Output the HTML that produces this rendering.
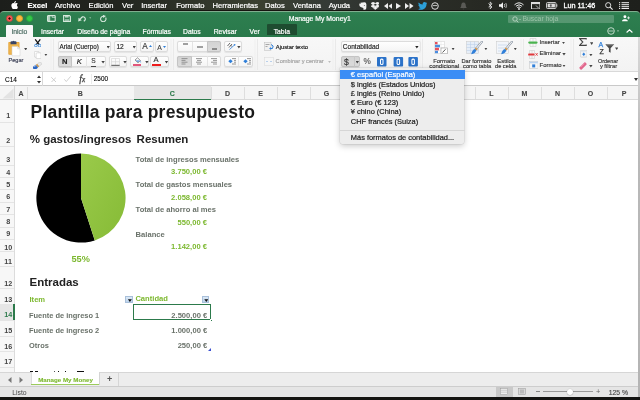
<!DOCTYPE html>
<html><head><meta charset="utf-8">
<style>
*{margin:0;padding:0;box-sizing:border-box}
html,body{width:640px;height:400px;overflow:hidden;background:#141412;font-family:"Liberation Sans",sans-serif}
.a{position:absolute;white-space:nowrap}
#menubar{left:0;top:0;width:640px;height:11px;background:linear-gradient(90deg,#1c1e1b 0,#22251f 120px,#30352a 200px,#3a4030 260px,#343a36 330px,#2b2e29 400px,#282a24 470px,#20221e 560px,#1e201c 640px);border-bottom:0.8px solid #16140f;color:#fff;font-size:7.6px;-webkit-text-stroke:0.2px #fff}
#menubar .a{top:0.5px;line-height:9px}
#title{left:0;top:11px;width:640px;height:26px;border-radius:4px 4px 0 0;background:linear-gradient(#318354,#2d7e4f 3px,#2a794b);border-top:1px solid #7fae8e}
.tab{top:14.6px;font-size:6.8px;color:#fff;line-height:9px;-webkit-text-stroke:0.2px #fff}
.btn{position:absolute;background:linear-gradient(#fefefe,#f5f5f5);border:0.7px solid #dcdcdc;border-radius:2px;box-shadow:0 0.6px 0.8px rgba(0,0,0,.07)}
.prs{background:linear-gradient(#d3d3d3,#dcdcdc);border-color:#c4c4c4}
.sep{position:absolute;top:2px;width:0.8px;height:31px;background:#e9e9e9;box-shadow:-2.5px 0 0 #efefef}
.rt{position:absolute;white-space:nowrap;font-size:6.8px;line-height:8px;color:#333;-webkit-text-stroke-width:0.15px}
.dd{position:absolute;width:3.4px;height:2.6px;background:#444;clip-path:polygon(0 0,100% 0,50% 100%)}
#ribbon{left:0;top:37px;width:640px;height:35px;background:linear-gradient(#f8f8f8,#f3f3f3);border-bottom:1px solid #d9d9d9}
#fbar{left:0;top:72px;width:640px;height:14px;background:#fff;border-bottom:1.5px solid #c9c9c9}
.hd{top:2.5px;text-align:center;font-size:7px;font-weight:bold;line-height:9px;-webkit-text-stroke-width:0.1px}
#colhdr{left:0;top:86px;width:640px;height:14px;background:#f5f5f5;border-bottom:1px solid #dadada}
.rn{left:1px;width:14.3px;text-align:center;font-size:7.2px;font-weight:bold;line-height:9px}
#grid{left:0;top:100px;width:640px;height:272px;background:#fff}
.fb{width:7.9px;height:7.5px;background:linear-gradient(#dce9f6,#bcd3ec);border:0.6px solid #a9c0da}
.fb::after{content:"";position:absolute;left:1.7px;top:2.4px;width:4px;height:2.6px;background:#111;clip-path:polygon(0 0,100% 0,50% 100%)}
.mi{left:11px;font-size:7.45px;line-height:8px;color:#1a1a1a;-webkit-text-stroke-width:0.2px}
#tabs{left:0;top:371.5px;width:640px;height:15px;background:#ededed;border-top:1px solid #d6d6d6}
#status{left:0;top:386.3px;width:640px;height:10.4px;background:#e5e5e5;border-top:1.3px solid #cdcdcd}
</style></head>
<body>
<div id="root" class="a" style="left:0;top:0;width:640px;height:400px;will-change:transform">
<div id="menubar" class="a">
  <svg class="a" style="left:10.5px;top:0.9px" width="7.5" height="8.5" viewBox="0 0 170 200"><path fill="#fff" d="M150 170c-8 12-17 24-30 24s-17-8-32-8-20 8-32 8c-13 0-23-13-31-25C8 145-4 100 14 70c9-15 24-24 41-24 13 0 25 9 32 9s21-11 35-10c6 0 23 2 34 18-1 1-20 12-20 36 0 28 25 38 25 38s-4 14-11 33zM115 0c2 15-4 28-12 38-8 10-20 17-33 16-2-14 5-29 12-37 8-10 22-17 33-17z"/></svg>
  <svg class="a" style="left:359px;top:1.5px" width="8" height="8" viewBox="0 0 8 8"><path d="M1.5 .8 L5.5 .3 Q7.3 .4 7.4 2.5 L7.3 6.3 Q7 7.9 5.2 7.8 L4.3 7.6 L4 6.4 L5.2 6.4 L3.6 5.8 L1.6 5 Q.2 4.4 .3 2.6 L.4 1.8z" fill="#f2f2f2"/><path d="M.4 1.8 L1.8 1.8 L1.6 .8z" fill="#333"/><circle cx="5.3" cy="3.4" r=".5" fill="#555"/></svg>
  <svg class="a" style="left:370.7px;top:1.8px" width="8.6" height="7.8" viewBox="0 0 8.6 7.8"><path d="M2.15 0 L4.3 1.4 L2.15 2.8 L0 1.4z M6.45 0 L8.6 1.4 L6.45 2.8 L4.3 1.4z M2.15 2.8 L4.3 4.2 L2.15 5.6 L0 4.2z M6.45 2.8 L8.6 4.2 L6.45 5.6 L4.3 4.2z M4.3 4.6 L6.3 5.9 L4.3 7.6 L2.3 5.9z" fill="#f2f2f2" stroke="#f2f2f2" stroke-width=".6" stroke-linejoin="round"/></svg>
  <svg class="a" style="left:383.8px;top:2.5px" width="8.5" height="6" viewBox="0 0 8.5 6"><path d="M4 0 L4 6 L0 3z M8.5 0 L8.5 6 L4.5 3z" fill="#eee"/></svg>
  <svg class="a" style="left:396px;top:2.5px" width="5" height="6" viewBox="0 0 5 6"><path d="M0 0 L5 3 L0 6z" fill="#eee"/></svg>
  <svg class="a" style="left:405px;top:2.5px" width="8.5" height="6" viewBox="0 0 8.5 6"><path d="M0 0 L4 3 L0 6z M4.5 0 L8.5 3 L4.5 6z" fill="#eee"/></svg>
  <svg class="a" style="left:417.5px;top:1.8px" width="9.5" height="8" viewBox="0 0 24 20"><path fill="#2c9fd9" d="M24 2.4c-.9.4-1.8.6-2.8.8 1-.6 1.8-1.6 2.2-2.7-1 .6-2 1-3.1 1.2C19.3.7 18 0 16.6 0c-2.7 0-4.9 2.2-4.9 4.9 0 .4 0 .8.1 1.1C7.7 5.8 4.1 3.9 1.7.9c-.4.7-.7 1.6-.7 2.5 0 1.7.9 3.2 2.2 4.1-.8 0-1.6-.2-2.2-.6v.1c0 2.4 1.7 4.4 3.9 4.8-.4.1-.8.2-1.3.2-.3 0-.6 0-.9-.1.6 2 2.4 3.4 4.6 3.4-1.7 1.3-3.8 2.1-6.1 2.1-.4 0-.8 0-1.2-.1 2.2 1.4 4.8 2.2 7.5 2.2 9.1 0 14-7.5 14-14v-.6c1-.7 1.8-1.6 2.5-2.5z"/></svg>
  <svg class="a" style="left:431px;top:1.5px" width="8" height="8" viewBox="0 0 8 8"><circle cx="4" cy="4" r="3.3" fill="none" stroke="#eee" stroke-width=".9"/><path d="M1.8 3.6 h4.4" stroke="#eee" stroke-width=".8"/></svg>
  <svg class="a" style="left:459.5px;top:1.5px" width="7" height="8" viewBox="0 0 7 8"><path d="M3.5 0.5 C1.5 0.5 1.2 2.5 1.2 4 L0.3 6 H6.7 L5.8 4 C5.8 2.5 5.5 0.5 3.5 0.5z M2.6 6.8 a1 1 0 0 0 1.8 0z" fill="#5a5a56"/></svg>
  <svg class="a" style="left:487.5px;top:1.2px" width="5" height="9" viewBox="0 0 5 9"><path d="M0.5 2.5 L4 6 L2.2 7.8 V1 L4 2.8 L0.5 6.3" fill="none" stroke="#eee" stroke-width=".8"/></svg>
  <svg class="a" style="left:499.4px;top:1.8px" width="9" height="7" viewBox="0 0 9 7"><path d="M0 2.3 h1.8 L4 0.3 V6.7 L1.8 4.7 H0z" fill="#eee"/><path d="M5.3 2 Q6.2 3.5 5.3 5 M6.8 1 Q8.3 3.5 6.8 6" fill="none" stroke="#eee" stroke-width=".7"/></svg>
  <svg class="a" style="left:514px;top:1.5px" width="10" height="8" viewBox="0 0 10 8"><path d="M0.5 2.8 Q5 -1.2 9.5 2.8 M1.9 4.2 Q5 1.4 8.1 4.2 M3.3 5.6 Q5 4.2 6.7 5.6" fill="none" stroke="#eee" stroke-width="1"/><circle cx="5" cy="7" r=".9" fill="#eee"/></svg>
  <svg class="a" style="left:530.5px;top:1.8px" width="9.5" height="7.5" viewBox="0 0 9.5 7.5"><rect x=".5" y=".5" width="8.5" height="6.5" fill="none" stroke="#ddd" stroke-width="1"/><rect x=".5" y=".5" width="8.5" height="1.6" fill="#ddd"/><path d="M5 3.5 l2.5 2.5" stroke="#ddd" stroke-width=".8"/></svg>
  <svg class="a" style="left:546px;top:2px" width="11.5" height="7" viewBox="0 0 11.5 7"><rect x=".5" y=".5" width="9.5" height="6" rx="1" fill="none" stroke="#ddd" stroke-width=".9"/><rect x="10.3" y="2.3" width="1" height="2.4" fill="#ddd"/><rect x="1.6" y="1.6" width="7.3" height="3.8" fill="#ddd"/><path d="M5.3 2 L4 3.6 h1.5 L4.5 5" stroke="#222" stroke-width=".7" fill="none"/></svg>
  <svg class="a" style="left:604.8px;top:1.5px" width="8" height="8" viewBox="0 0 8 8"><circle cx="3.2" cy="3.2" r="2.6" fill="none" stroke="#eee" stroke-width=".9"/><path d="M5.1 5.1 L7.6 7.6" stroke="#eee" stroke-width="1.1"/></svg>
  <svg class="a" style="left:619px;top:2px" width="10" height="7" viewBox="0 0 10 7"><path d="M0 .7h1.2M0 2.7h1.2M0 4.7h1.2M0 6.5h1.2 M2.5 .7h7.5M2.5 2.7h7.5M2.5 4.7h7.5M2.5 6.5h7.5" stroke="#eee" stroke-width="1"/></svg>
  <div class="a" style="left:27.5px;font-weight:bold">Excel</div>
  <div class="a" style="left:55px">Archivo</div>
  <div class="a" style="left:88.6px">Edición</div>
  <div class="a" style="left:122px">Ver</div>
  <div class="a" style="left:141.2px">Insertar</div>
  <div class="a" style="left:176.2px">Formato</div>
  <div class="a" style="left:212.5px">Herramientas</div>
  <div class="a" style="left:265px">Datos</div>
  <div class="a" style="left:293px">Ventana</div>
  <div class="a" style="left:328.7px">Ayuda</div>
  <div class="a" style="left:563.4px;font-size:7.3px;-webkit-text-stroke-width:0.3px">Lun 11:46</div>
</div>
<div id="title" class="a">
  <div class="a" style="left:6.4px;top:2.75px;width:7px;height:7px;border-radius:50%;background:radial-gradient(circle at 50% 50%,#2a0504 0,#3a0806 0.8px,#fc605c 1.5px);border:0.5px solid #d8433f"></div>
  <div class="a" style="left:16.4px;top:2.75px;width:7px;height:7px;border-radius:50%;background:#fcbb40;border:0.5px solid #dc9d2b"></div>
  <div class="a" style="left:26.25px;top:2.75px;width:7px;height:7px;border-radius:50%;background:#34c84a;border:0.5px solid #27a83a"></div>
  <svg class="a" style="left:47.3px;top:2.9px" width="9" height="7" viewBox="0 0 9 7"><rect x=".6" y=".6" width="7.6" height="5.8" rx=".6" fill="none" stroke="#d6e8dc" stroke-width="1.1"/><rect x=".6" y=".6" width="2.6" height="5.8" fill="#d6e8dc" opacity=".75"/><path d="M5.2 .6 V2.4 H8.2" fill="none" stroke="#d6e8dc" stroke-width=".7"/></svg>
  <svg class="a" style="left:63.2px;top:2.9px" width="8" height="7" viewBox="0 0 8 7"><path d="M.6 .6 H6.4 L7.4 1.6 V6.4 H.6z" fill="none" stroke="#d6e8dc" stroke-width="1.1"/><rect x="2" y=".6" width="3.6" height="2" fill="#d6e8dc" opacity=".8"/><rect x="1.8" y="4" width="4.4" height="2" fill="#d6e8dc" opacity=".55"/></svg>
  <svg class="a" style="left:77.8px;top:3px" width="14" height="7" viewBox="0 0 14 7"><path d="M2.2 4.2 Q4.5 .5 6.6 2.4 Q8.4 4.2 5.8 6.3" fill="none" stroke="#d6e8dc" stroke-width="1.2"/><path d="M.2 6.6 L.6 2.8 L3.8 5.2z" fill="#d6e8dc"/><path d="M11.3 2.4 h1.8 l-.9 1.2z" fill="#d6e8dc"/></svg>
  <svg class="a" style="left:99.8px;top:2.8px" width="7" height="7" viewBox="0 0 7 7"><path d="M5.6 2.6 A2.7 2.7 0 1 1 3.6 1.3" fill="none" stroke="#d6e8dc" stroke-width="1.1"/><path d="M2.8 -.2 L6 1 L3.3 3z" fill="#d6e8dc"/></svg>
  <div class="a" style="left:288.7px;top:2.4px;font-size:6.85px;color:#fff;line-height:9px;-webkit-text-stroke-width:0.2px">Manage My Money1</div>
  <div class="a" style="left:508.3px;top:2.6px;width:105.4px;height:8px;background:rgba(255,255,255,.2);border-radius:1px"></div>
  <svg class="a" style="left:511.5px;top:3.5px" width="10" height="7" viewBox="0 0 10 7"><circle cx="3" cy="3" r="2.2" fill="none" stroke="#b9d7c3" stroke-width=".9"/><path d="M4.6 4.6 L6.2 6.4" stroke="#b9d7c3" stroke-width="1"/><path d="M7 3 h2 l-1 1z" fill="#b9d7c3"/></svg>
  <div class="a" style="left:522.5px;top:2.2px;font-size:6.8px;color:#9cc5a9;line-height:9px">Buscar hoja</div>
  <svg class="a" style="left:620.8px;top:3px" width="10" height="6.5" viewBox="0 0 12 9"><circle cx="4.5" cy="2.5" r="2" fill="#fff"/><path d="M0.5 8.5 C0.5 5 8.5 5 8.5 8.5z" fill="#fff"/><path d="M9.5 2 v4 M7.5 4 h4" stroke="#fff" stroke-width="1"/></svg>
  <svg class="a" style="left:606.8px;top:14.6px" width="14" height="8" viewBox="0 0 14 8"><circle cx="4" cy="4" r="3.3" fill="none" stroke="#cfe3d6" stroke-width=".9"/><path d="M1.5 4 h5" stroke="#cfe3d6" stroke-width=".8"/><path d="M10 3.5 h2 l-1 1.2z" fill="#cfe3d6"/></svg>
  <svg class="a" style="left:625.5px;top:16.8px" width="7" height="4" viewBox="0 0 7 4"><path d="M.6 3.5 L3.5 .8 L6.4 3.5" fill="none" stroke="#fff" stroke-width="1.1"/></svg>
  <div class="a" style="left:5.9px;top:12.9px;width:27.3px;height:13.1px;background:#f8f8f8;border-radius:1px 1px 0 0"></div>
  <div class="a tab" style="left:11.4px;color:#4f6f66;-webkit-text-stroke:0.2px #4f6f66">Inicio</div>
  <div class="a tab" style="left:41px">Insertar</div>
  <div class="a tab" style="left:77.3px">Diseño de página</div>
  <div class="a tab" style="left:142.5px">Fórmulas</div>
  <div class="a tab" style="left:183px">Datos</div>
  <div class="a tab" style="left:213.7px">Revisar</div>
  <div class="a tab" style="left:249.5px">Ver</div>
  <div class="a" style="left:267.3px;top:12.2px;width:29.4px;height:11.3px;background:#1e4c30;border-radius:1px 1px 0 0"></div>
  <div class="a tab" style="left:273.7px">Tabla</div>
</div>
<div id="ribbon" class="a">
  <!-- clipboard -->
  <svg class="a" style="left:7.5px;top:2.5px" width="13" height="17" viewBox="0 0 13 17"><rect x=".3" y="2" width="11.2" height="12.8" rx=".8" fill="#e6a73c"/><rect x="1.3" y="3" width="9.2" height="10.8" fill="#efb650"/><path d="M2.5 4.3 V2.2 Q2.5 1.3 3.5 1.3 H4.6 Q5.5 .2 6.4 1.3 H7.5 Q8.5 1.3 8.5 2.2 V4.3z" fill="#3a4566"/><path d="M4 6.5 H9.6 L12 8.9 V15.8 H4z" fill="#fff" stroke="#cfcfcf" stroke-width=".5"/><path d="M9.6 6.5 V8.9 H12" fill="#ececec" stroke="#c9c9c9" stroke-width=".4"/></svg>
  <div class="dd" style="left:24px;top:10.8px"></div>
  <div class="rt" style="left:8.5px;top:19.26px;font-size:5.6px;color:#3a3f55;">Pegar</div>
  <svg class="a" style="left:33.6px;top:1.6px" width="7.5" height="8.5" viewBox="0 0 7.5 8.5"><path d="M1.2 .3 L5.2 5.6 M6.3 .3 L2.3 5.6" stroke="#111" stroke-width="1.2"/><circle cx="1.9" cy="6.6" r="1.35" fill="none" stroke="#3a86d6" stroke-width=".9"/><circle cx="5.6" cy="6.6" r="1.35" fill="none" stroke="#3a86d6" stroke-width=".9"/></svg>
  <svg class="a" style="left:33.6px;top:13.8px" width="7.5" height="8" viewBox="0 0 7.5 8"><path d="M1 .4 H4 Q5 .4 5 1.4 V5.2 Q5 6.2 4 6.2 H1 Q.4 6.2 .4 5.2 V1.4 Q.4 .4 1 .4z" fill="#fff" stroke="#c8c8c8" stroke-width=".6"/><path d="M3 1.8 H6.2 Q7.1 1.8 7.1 2.8 V6.7 Q7.1 7.6 6.2 7.6 H3 Q2.1 7.6 2.1 6.7 V2.8 Q2.1 1.8 3 1.8z" fill="#fff" stroke="#c8c8c8" stroke-width=".6"/></svg>
  <div class="dd" style="left:44.2px;top:16.5px"></div>
  <svg class="a" style="left:33px;top:24.8px" width="9" height="7.5" viewBox="0 0 9 7.5"><g transform="rotate(-38 4.5 3.75)"><rect x="5.2" y="2.2" width="4" height="3" rx=".6" fill="#e9e9e9" stroke="#b9b9b9" stroke-width=".4"/><rect x="3.6" y="2" width="1.8" height="3.4" fill="#c99a55"/><path d="M-.2 1.8 H3.7 V5.6 H-.2 Q-1 3.7 -.2 1.8z" fill="#2a66c4"/><rect x="1" y="2" width="2.4" height="1" fill="#fff" opacity=".5"/></g></svg>
  <div class="sep" style="left:52.6px"></div>
  <!-- font -->
  <div class="btn" style="left:57.6px;top:3.8px;width:53.8px;height:11.4px"></div>
  <div class="rt" style="left:59.6px;top:6.07px;font-size:6.3px;color:#222;">Arial (Cuerpo)</div>
  <div class="dd" style="left:106.5px;top:9px"></div>
  <div class="btn" style="left:113.7px;top:3.8px;width:23.5px;height:11.4px"></div>
  <div class="rt" style="left:116.4px;top:5.96px;font-size:6.6px;color:#222;">12</div>
  <div class="dd" style="left:132.5px;top:9px"></div>
  <div class="btn" style="left:139.9px;top:3.8px;width:14px;height:11.4px"></div>
  <div class="rt" style="left:142.2px;top:6.4px;font-size:8.2px;color:#333">A</div>
  <svg class="a" style="left:149.3px;top:8.3px" width="3" height="2"><path d="M0 2 L1.5 0 L3 2z" fill="#2f7fd9"/></svg>
  <div class="btn" style="left:155.2px;top:3.8px;width:13.2px;height:11.4px"></div>
  <div class="rt" style="left:157.3px;top:6.6px;font-size:6.8px;color:#444">A</div>
  <svg class="a" style="left:163.2px;top:8.5px" width="3" height="2"><path d="M0 0 L1.5 2 L3 0z" fill="#2f7fd9"/></svg>
  <div class="btn" style="left:57.6px;top:18.8px;width:48.4px;height:11.7px"></div>
  <div class="btn prs" style="left:57.6px;top:18.8px;width:14.7px;height:11.7px;border-radius:2px 0 0 2px"></div>
  <div class="a" style="left:86px;top:19.5px;width:0.5px;height:10.5px;background:#e4e4e4"></div>
  <div class="rt" style="left:62px;top:20.8px;font-size:7.6px;font-weight:bold;color:#222">N</div>
  <div class="rt" style="left:76.8px;top:20.8px;font-size:7.6px;font-style:italic;color:#222">K</div>
  <div class="rt" style="left:91.2px;top:20.3px;font-size:6.6px;color:#444">S</div><div class="a" style="left:91px;top:29.2px;width:5px;height:0.7px;background:#444"></div>
  <div class="dd" style="left:101.4px;top:24px"></div>
  <div class="btn" style="left:109.3px;top:18.8px;width:18px;height:11.7px"></div>
  <svg class="a" style="left:111px;top:20.5px" width="9" height="8" viewBox="0 0 9 8"><path d="M0.5 0.5h8v6.5h-8z M4.5 0.5v6.5 M0.5 3.7h8" fill="none" stroke="#d0d0d0" stroke-width=".6"/><path d="M0.3 7.4h8.4" stroke="#555" stroke-width=".9"/></svg>
  <div class="dd" style="left:123.3px;top:24px"></div>
  <div class="btn" style="left:129.5px;top:18.8px;width:19.7px;height:11.7px"></div>
  <svg class="a" style="left:132.5px;top:19.8px" width="9" height="7" viewBox="0 0 9 7"><path d="M2 3 L4.5 0.8 L7.5 3.5 L5 5.8z" fill="#fff" stroke="#555" stroke-width=".6"/><path d="M7.7 3.8 Q8.6 5.2 7.9 5.8 Q7 5.3 7.7 3.8z" fill="#2f7fd9"/><path d="M2.8 3.4 L5 5 L7 3.4z" fill="#2f7fd9"/></svg>
  <div class="a" style="left:132.8px;top:27.3px;width:8.5px;height:1.7px;background:#e2567a"></div>
  <div class="dd" style="left:145.2px;top:24px"></div>
  <div class="btn" style="left:149.8px;top:18.8px;width:19.7px;height:11.7px"></div>
  <div class="rt" style="left:153.5px;top:19.2px;font-size:7.6px;color:#333">A</div>
  <div class="a" style="left:152.2px;top:27.3px;width:8.6px;height:1.8px;background:#ee1c1c"></div>
  <div class="dd" style="left:164.8px;top:24px"></div>
  <div class="sep" style="left:173px"></div>
  <!-- alignment -->
  <div class="btn" style="left:177.3px;top:3.9px;width:44.2px;height:11.3px"></div>
  <div class="btn prs" style="left:206.8px;top:3.9px;width:14.7px;height:11.3px;border-radius:0 2px 2px 0"></div>
  <div class="a" style="left:192.4px;top:4.5px;width:0.5px;height:10px;background:#e4e4e4"></div>
  <div class="a" style="left:182.5px;top:6px;width:5.5px;height:2px;background:#a0a0a0"></div>
  <div class="a" style="left:197px;top:8.7px;width:5.5px;height:2px;background:#a0a0a0"></div>
  <div class="a" style="left:211.5px;top:11px;width:5.5px;height:2px;background:#8a8a8a"></div>
  <div class="btn" style="left:223.9px;top:3.9px;width:17.7px;height:11.3px"></div>
  <svg class="a" style="left:227px;top:5.3px" width="9" height="8" viewBox="0 0 9 8"><path d="M0.5 4 L3 1 M2 5.5 L5 2 M3.5 3 L4.8 4.5" stroke="#444" stroke-width=".8" fill="none"/><path d="M2.5 7.5 L8 2.5" stroke="#2f7fd9" stroke-width=".8"/><path d="M8.5 2 L6.5 2.5 L8 4z" fill="#2f7fd9"/></svg>
  <div class="dd" style="left:237.2px;top:9px"></div>
  <div class="btn" style="left:177.3px;top:18.7px;width:44.2px;height:11.4px"></div>
  <div class="btn prs" style="left:177.3px;top:18.7px;width:15px;height:11.4px;border-radius:2px 0 0 2px"></div>
  <div class="a" style="left:206.8px;top:19.3px;width:0.5px;height:10px;background:#e4e4e4"></div>
  <svg class="a" style="left:181px;top:20.8px" width="40" height="7" viewBox="0 0 40 7"><path d="M0.5 .6h6M0.5 2.4h4M0.5 4.2h6M0.5 6h4 M15 .6h6M16 2.4h4M15 4.2h6M16 6h4 M30 .6h6M32 2.4h4M30 4.2h6M32 6h4" stroke="#8a8a8a" stroke-width=".9"/></svg>
  <div class="btn" style="left:223.9px;top:18.7px;width:28.8px;height:11.4px"></div>
  <div class="a" style="left:238.3px;top:19.3px;width:0.5px;height:10px;background:#e4e4e4"></div>
  <svg class="a" style="left:227.5px;top:20.8px" width="24" height="7" viewBox="0 0 24 7"><path d="M4 .6h4M6 2.4h2M6 4.2h2M4 6h4 M19 .6h4M21 2.4h2M21 4.2h2M19 6h4" stroke="#8a8a8a" stroke-width=".9"/><path d="M0.3 3.3 L2.5 1.3 L4.7 3.3 L2.5 5.3z" fill="#2f7fd9"/><path d="M15.3 3.3 L17.5 1.3 L19.7 3.3 L17.5 5.3z" fill="#2f7fd9"/></svg>
  <div class="sep" style="left:257px"></div>
  <!-- wrap -->
  <svg class="a" style="left:263.8px;top:5px" width="11" height="9" viewBox="0 0 11 9"><rect x="0.5" y="0.5" width="6.5" height="8" fill="#f0f0f0" stroke="#bbb" stroke-width=".5"/><path d="M1.5 2.5h4 M1.5 4.5h2" stroke="#888" stroke-width=".7"/><path d="M7 2.5 Q10.5 3.5 8.5 6.5 L6 6.5" fill="none" stroke="#2f7fd9" stroke-width="1"/><path d="M6.8 5 L5.2 6.5 L6.8 8z" fill="#2f7fd9"/></svg>
  <div class="rt" style="left:275.8px;top:5.7px;font-size:5.8px;color:#111;">Ajustar texto</div>
  <svg class="a" style="left:263.8px;top:19.8px" width="10" height="9" viewBox="0 0 10 9"><rect x="0.5" y="0.5" width="9" height="8" fill="#f6f6f6" stroke="#d8d8d8" stroke-width=".5"/><path d="M2 4.5h2 M6 4.5h2" stroke="#a9c6e8" stroke-width=".8"/></svg>
  <div class="rt" style="left:275.6px;top:20.2px;font-size:5.66px;color:#a2a2a2;">Combinar y centrar</div>
  <div class="dd" style="left:327.8px;top:23.5px;background:#bbb"></div>
  <div class="sep" style="left:335px"></div>
  <!-- number -->
  <div class="btn" style="left:340.5px;top:3.8px;width:80.1px;height:11.6px"></div>
  <div class="rt" style="left:342.8px;top:5.9px;font-size:6.55px;color:#222;">Contabilidad</div>
  <div class="dd" style="left:415.2px;top:9px;background:#222"></div>
  <div class="btn prs" style="left:341.2px;top:19px;width:18.8px;height:11.3px"></div>
  <div class="a" style="left:353.6px;top:19.3px;width:0.6px;height:10.7px;background:#c8c8c8"></div>
  <div class="rt" style="left:343.9px;top:20.6px;font-size:8.6px;color:#333">$</div>
  <div class="dd" style="left:355.6px;top:24px"></div>
  <div class="rt" style="left:363.6px;top:20.6px;font-size:8.2px;color:#555">%</div>
  <svg class="a" style="left:377px;top:20px" width="41" height="10" viewBox="0 0 41 10"><g fill="#2b72c9"><rect x="0" y="0" width="9.5" height="9.5" rx="1"/><rect x="16.6" y="0" width="9.5" height="9.5" rx="1"/><rect x="31.4" y="0" width="9.5" height="9.5" rx="1"/></g><g fill="#fff"><rect x="3" y="1.6" width="3.5" height="6.5" rx="1.5"/><rect x="19.6" y="1.6" width="3.5" height="6.5" rx="1.5"/><rect x="34.4" y="1.6" width="3.5" height="6.5" rx="1.5"/></g><g fill="#2b72c9"><rect x="4" y="2.8" width="1.5" height="4.1" rx=".6"/><rect x="20.6" y="2.8" width="1.5" height="4.1" rx=".6"/><rect x="35.4" y="2.8" width="1.5" height="4.1" rx=".6"/></g></svg>
  <div class="sep" style="left:421.5px"></div>
  <!-- styles -->
  <svg class="a" style="left:434px;top:4.2px" width="14" height="13" viewBox="0 0 14 13"><rect x="0.5" y="0.5" width="10" height="12" fill="#fff" stroke="#cfcfcf" stroke-width=".5"/><path d="M0.5 3.5h10 M0.5 6.5h10 M0.5 9.5h10 M3.5 0.5v12 M7 .5v12" stroke="#e3e3e3" stroke-width=".5"/><rect x="1" y="1" width="2.5" height="2.3" fill="#e8505b"/><rect x="1" y="3.8" width="5" height="2.5" fill="#4a8ee0"/><rect x="1" y="6.8" width="4" height="2.5" fill="#e8505b"/><rect x="1" y="9.8" width="3" height="2.4" fill="#4a8ee0"/><rect x="7" y="7" width="6.5" height="5.8" fill="#fff" stroke="#999" stroke-width=".6"/><path d="M8.5 11.5 L11.5 8.3" stroke="#444" stroke-width=".9"/></svg>
  <div class="dd" style="left:451.4px;top:10.6px"></div>
  <div class="rt" style="left:433.3px;top:19.57px;font-size:5.85px;color:#333;">Formato</div>
  <div class="rt" style="left:429.2px;top:25.22px;font-size:6.0px;color:#333;">condicional</div>
  <svg class="a" style="left:466px;top:4px" width="17" height="14" viewBox="0 0 17 14"><rect x="0.5" y="0.5" width="12" height="12" fill="#e6eef8" stroke="#c8c8c8" stroke-width=".5"/><path d="M0.5 3.5h12 M0.5 6.5h12 M0.5 9.5h12 M4.5 .5v12 M8.5 .5v12" stroke="#b9cde6" stroke-width=".5"/><path d="M15.8 .8 L10.2 7.6" stroke="#6f7f93" stroke-width="2.1" stroke-linecap="round"/><path d="M15.8 .8 L10.2 7.6" stroke="#f0f0f0" stroke-width="1.2" stroke-linecap="round"/><path d="M9.3 7.2 L11 8.8" stroke="#d9973f" stroke-width="1.8"/><path d="M9 8 Q6 8.8 5.2 13.2 Q9.5 12.6 10.3 9.2z" fill="#2f7fd9"/></svg>
  <div class="dd" style="left:484.2px;top:10.6px"></div>
  <div class="rt" style="left:461.5px;top:19.62px;font-size:5.7px;color:#333;">Dar formato</div>
  <div class="rt" style="left:463px;top:25.30px;font-size:5.77px;color:#333;">como tabla</div>
  <svg class="a" style="left:495.5px;top:4px" width="17" height="14" viewBox="0 0 17 14"><rect x="0.5" y="0.5" width="12" height="12" fill="#f2f5fa" stroke="#c8c8c8" stroke-width=".5"/><path d="M2 4h9 M2 7h9 M2 10h9" stroke="#b9cde6" stroke-width=".6"/><path d="M15.8 .8 L10.2 7.6" stroke="#6f7f93" stroke-width="2.1" stroke-linecap="round"/><path d="M15.8 .8 L10.2 7.6" stroke="#f0f0f0" stroke-width="1.2" stroke-linecap="round"/><path d="M9.3 7.2 L11 8.8" stroke="#d9973f" stroke-width="1.8"/><path d="M9 8 Q6 8.8 5.2 13.2 Q9.5 12.6 10.3 9.2z" fill="#2f7fd9"/></svg>
  <div class="dd" style="left:513.6px;top:10.6px"></div>
  <div class="rt" style="left:497.3px;top:19.55px;font-size:5.93px;color:#333;">Estilos</div>
  <div class="rt" style="left:495px;top:25.34px;font-size:5.66px;color:#333;">de celda</div>
  <div class="sep" style="left:522.8px"></div>
  <!-- cells -->
  <svg class="a" style="left:528.3px;top:0.6px" width="10" height="9" viewBox="0 0 10 9"><path d="M2 .5h6v3 M2 .5v3 M5 .5v3 M2 5.5v3h6v-3 M5 5.5v3" fill="none" stroke="#c6c6c6" stroke-width=".5"/><rect x=".2" y="3.5" width="9.4" height="2.2" rx="1.1" fill="#4bb34f"/></svg>
  <div class="rt" style="left:539.5px;top:0.75px;font-size:5.96px;color:#333">Insertar</div>
  <div class="dd" style="left:561.8px;top:4.5px"></div>
  <svg class="a" style="left:528.3px;top:12.5px" width="10" height="9" viewBox="0 0 10 9"><path d="M1.5 .5h5v3 M1.5 .5v3 M4 .5v3 M1.5 5.5v3h5v-3 M4 5.5v3" fill="none" stroke="#c6c6c6" stroke-width=".5"/><rect x=".2" y="3.4" width="6.4" height="2.2" rx=".6" fill="#e0383c"/><path d="M7.6 3.2 L9.6 5.6 M9.6 3.2 L7.6 5.6" stroke="#e0383c" stroke-width=".9"/></svg>
  <div class="rt" style="left:539.5px;top:12.45px;font-size:5.96px;color:#333">Eliminar</div>
  <div class="dd" style="left:562.3px;top:16px"></div>
  <svg class="a" style="left:528.8px;top:23.8px" width="9.5" height="8" viewBox="0 0 9.5 8"><rect x=".4" y=".4" width="8.7" height="7.2" fill="#f7f7f7" stroke="#c9c9c9" stroke-width=".6"/><rect x=".7" y=".7" width="8.1" height="1.6" fill="#b9d2ee"/><rect x="3.2" y="3.4" width="3" height="3" fill="#2f7fd9"/></svg>
  <div class="rt" style="left:539.5px;top:24.15px;font-size:5.96px;color:#333">Formato</div>
  <div class="dd" style="left:562.3px;top:27.5px"></div>
  <div class="sep" style="left:572.6px"></div>
  <!-- editing -->
  <svg class="a" style="left:579.4px;top:1.4px" width="7.5" height="8" viewBox="0 0 7.5 8"><path d="M7.2 1.6 V.6 H.6 L3.8 4 L.6 7.4 H7.2 V6.4" fill="none" stroke="#444" stroke-width="1.1" stroke-linejoin="miter"/></svg>
  <div class="dd" style="left:590px;top:5.3px"></div>
  <svg class="a" style="left:579.5px;top:13.1px" width="7.5" height="7.5" viewBox="0 0 7.5 7.5"><rect x=".4" y=".4" width="6.7" height="6.7" rx=".8" fill="#f4f4f4" stroke="#c4c4c4" stroke-width=".6"/><rect x=".7" y=".7" width="6.1" height="1.3" fill="#dfe6ef"/><path d="M3.75 2.6 L5.3 4.3 L3.75 6 L2.2 4.3z" fill="#2f7fd9"/></svg>
  <div class="dd" style="left:589.2px;top:16.7px"></div>
  <svg class="a" style="left:579px;top:24.8px" width="8" height="8" viewBox="0 0 8 8"><path d="M.6 5.3 L5.3 .6 Q5.9 0 6.5 .6 L7.4 1.5 Q8 2.1 7.4 2.7 L2.7 7.4 Q2.1 8 1.5 7.4 L.6 6.5 Q0 5.9 .6 5.3z" fill="#e2668c"/><path d="M1.6 5.1 L5.1 1.6" stroke="#f5c0d0" stroke-width=".6"/></svg>
  <div class="dd" style="left:589.2px;top:28px"></div>
  <div class="rt" style="left:598.6px;top:3.6px;font-size:7px;line-height:7px;color:#2f7fd9;-webkit-text-stroke-width:0.25px">A</div>
  <div class="rt" style="left:599.5px;top:10.8px;font-size:7px;line-height:7px;color:#333;-webkit-text-stroke-width:0.25px">Z</div>
  <svg class="a" style="left:605.3px;top:6.9px" width="9.5" height="9" viewBox="0 0 9.5 9"><path d="M.3 .3 H9.2 L5.6 4.2 V8.8 L3.9 7.8 V4.2z" fill="#4a4a4a"/><path d="M1.6 .9 H7.9" stroke="#bbb" stroke-width=".5"/></svg>
  <div class="dd" style="left:615px;top:10.4px"></div>
  <div class="rt" style="left:597.9px;top:19.98px;font-size:5.53px;color:#333;">Ordenar</div>
  <div class="rt" style="left:599.9px;top:25.30px;font-size:5.76px;color:#333;">y filtrar</div>
</div>
<div id="fbar" class="a">
  <div class="a" style="left:5px;top:3.6px;font-size:6.5px;line-height:8px;color:#000;-webkit-text-stroke-width:0.1px">C14</div>
  <svg class="a" style="left:36.8px;top:2.8px" width="4" height="9" viewBox="0 0 4 9"><path d="M0 3 L2 0.5 L4 3z M0 6 L2 8.5 L4 6z" fill="#333"/></svg>
  <div class="a" style="left:42.3px;top:0;width:0.8px;height:13.5px;background:#d8d8d8"></div>
  <svg class="a" style="left:50.5px;top:4.5px" width="5.5" height="5.5" viewBox="0 0 5.5 5.5"><path d="M0.3 0.3 L5.2 5.2 M5.2 0.3 L0.3 5.2" stroke="#c4c4c4" stroke-width=".8"/></svg>
  <svg class="a" style="left:63.8px;top:4.3px" width="7" height="6" viewBox="0 0 7 6"><path d="M0.3 3.3 L2.3 5.5 L6.7 0.3" fill="none" stroke="#c4c4c4" stroke-width=".8"/></svg>
  <div class="a" style="left:79.3px;top:1.6px;font-family:'Liberation Serif',serif;font-style:italic;font-size:9.5px;line-height:10px;color:#3a3a3a;-webkit-text-stroke-width:0.25px">f<span style="font-size:7.2px">x</span></div>
  <div class="a" style="left:90.5px;top:2px;width:0.6px;height:10px;background:#ebebeb"></div>
  <div class="a" style="left:93.8px;top:2.9px;font-size:6.4px;line-height:8px;color:#000;-webkit-text-stroke-width:0.1px">2500</div>
  <svg class="a" style="left:634px;top:5.5px" width="4" height="3" viewBox="0 0 4 3"><path d="M0 0 L4 0 L2 3z" fill="#333"/></svg>
</div>
<div id="colhdr" class="a">
  <svg class="a" style="left:1px;top:1.5px" width="13" height="11" viewBox="0 0 13 11"><path d="M12.5 0.5 V10.5 H1.5z" fill="#e3e3e3"/></svg>
  <div class="a" style="left:14.3px;top:0;width:0.8px;height:14px;background:#d6d6d6"></div>
  <div class="a" style="left:27px;top:1px;width:0.6px;height:12px;background:#dedede"></div>
  <div class="a hd" style="left:15px;width:12px;color:#444">A</div>
  <div class="a" style="left:133.5px;top:1px;width:0.6px;height:12px;background:#dedede"></div>
  <div class="a hd" style="left:27px;width:106.5px;color:#444">B</div>
  <div class="a" style="left:133.5px;top:0;width:77.5px;height:13.3px;background:#e6e6e6"></div>
  <div class="a" style="left:133.5px;top:12.6px;width:77.5px;height:1.6px;background:#2c7a4b"></div>
  <div class="a" style="left:211px;top:1px;width:0.6px;height:12px;background:#dedede"></div>
  <div class="a hd" style="left:133.5px;width:77.5px;color:#2c7a4b">C</div>
  <div class="a" style="left:244px;top:1px;width:0.6px;height:12px;background:#dedede"></div>
  <div class="a hd" style="left:211px;width:33px;color:#444">D</div>
  <div class="a" style="left:277px;top:1px;width:0.6px;height:12px;background:#dedede"></div>
  <div class="a hd" style="left:244px;width:33px;color:#444">E</div>
  <div class="a" style="left:310px;top:1px;width:0.6px;height:12px;background:#dedede"></div>
  <div class="a hd" style="left:277px;width:33px;color:#444">F</div>
  <div class="a" style="left:343px;top:1px;width:0.6px;height:12px;background:#dedede"></div>
  <div class="a hd" style="left:310px;width:33px;color:#444">G</div>
  <div class="a" style="left:376px;top:1px;width:0.6px;height:12px;background:#dedede"></div>
  <div class="a hd" style="left:343px;width:33px;color:#444">H</div>
  <div class="a" style="left:409px;top:1px;width:0.6px;height:12px;background:#dedede"></div>
  <div class="a hd" style="left:376px;width:33px;color:#444">I</div>
  <div class="a" style="left:442px;top:1px;width:0.6px;height:12px;background:#dedede"></div>
  <div class="a hd" style="left:409px;width:33px;color:#444">J</div>
  <div class="a" style="left:475px;top:1px;width:0.6px;height:12px;background:#dedede"></div>
  <div class="a hd" style="left:442px;width:33px;color:#444">K</div>
  <div class="a" style="left:508px;top:1px;width:0.6px;height:12px;background:#dedede"></div>
  <div class="a hd" style="left:475px;width:33px;color:#444">L</div>
  <div class="a" style="left:541px;top:1px;width:0.6px;height:12px;background:#dedede"></div>
  <div class="a hd" style="left:508px;width:33px;color:#444">M</div>
  <div class="a" style="left:574px;top:1px;width:0.6px;height:12px;background:#dedede"></div>
  <div class="a hd" style="left:541px;width:33px;color:#444">N</div>
  <div class="a" style="left:607px;top:1px;width:0.6px;height:12px;background:#dedede"></div>
  <div class="a hd" style="left:574px;width:33px;color:#444">O</div>
  <div class="a" style="left:638.5px;top:1px;width:0.6px;height:12px;background:#dedede"></div>
  <div class="a hd" style="left:607.5px;width:33px;color:#444">P</div>
</div>
<div id="grid" class="a">
  <div class="a" style="left:0;top:0;width:14.3px;height:272px;background:#f7f7f7"></div>
  <div class="a" style="left:14.3px;top:0;width:1px;height:272px;background:#dcdcdc"></div>
  <div class="a" style="left:0;top:22.0px;width:14.3px;height:0.6px;background:#e4e4e4"></div>
  <div class="a rn" style="top:11.19px;color:#444">1</div>
  <div class="a" style="left:0;top:45.5px;width:14.3px;height:0.6px;background:#e4e4e4"></div>
  <div class="a rn" style="top:35.59px;color:#444">2</div>
  <div class="a" style="left:0;top:64.5px;width:14.3px;height:0.6px;background:#e4e4e4"></div>
  <div class="a rn" style="top:55.09px;color:#444">3</div>
  <div class="a" style="left:0;top:76.9px;width:14.3px;height:0.6px;background:#e4e4e4"></div>
  <div class="a rn" style="top:67.79px;color:#444">4</div>
  <div class="a" style="left:0;top:89.3px;width:14.3px;height:0.6px;background:#e4e4e4"></div>
  <div class="a rn" style="top:80.09px;color:#444">5</div>
  <div class="a" style="left:0;top:101.7px;width:14.3px;height:0.6px;background:#e4e4e4"></div>
  <div class="a rn" style="top:92.39px;color:#444">6</div>
  <div class="a" style="left:0;top:114.1px;width:14.3px;height:0.6px;background:#e4e4e4"></div>
  <div class="a rn" style="top:104.99px;color:#444">7</div>
  <div class="a" style="left:0;top:126.5px;width:14.3px;height:0.6px;background:#e4e4e4"></div>
  <div class="a rn" style="top:117.29px;color:#444">8</div>
  <div class="a" style="left:0;top:138.9px;width:14.3px;height:0.6px;background:#e4e4e4"></div>
  <div class="a rn" style="top:129.29px;color:#444">9</div>
  <div class="a" style="left:0;top:151.4px;width:14.3px;height:0.6px;background:#e4e4e4"></div>
  <div class="a rn" style="top:142.59px;color:#444">10</div>
  <div class="a" style="left:0;top:166.0px;width:14.3px;height:0.6px;background:#e4e4e4"></div>
  <div class="a rn" style="top:156.89px;color:#444">11</div>
  <div class="a" style="left:0;top:188.0px;width:14.3px;height:0.6px;background:#e4e4e4"></div>
  <div class="a rn" style="top:179.19px;color:#444">12</div>
  <div class="a" style="left:0;top:203.7px;width:14.3px;height:0.6px;background:#e4e4e4"></div>
  <div class="a rn" style="top:195.09px;color:#444">13</div>
  <div class="a" style="left:0;top:204.2px;width:14.3px;height:16.1px;background:#e6e6e6"></div>
  <div class="a" style="left:13.2px;top:204.2px;width:1.6px;height:16.1px;background:#2c7a4b"></div>
  <div class="a" style="left:0;top:219.8px;width:14.3px;height:0.6px;background:#e4e4e4"></div>
  <div class="a rn" style="top:210.19px;color:#2c7a4b">14</div>
  <div class="a" style="left:0;top:235.5px;width:14.3px;height:0.6px;background:#e4e4e4"></div>
  <div class="a rn" style="top:225.99px;color:#444">15</div>
  <div class="a" style="left:0;top:251.0px;width:14.3px;height:0.6px;background:#e4e4e4"></div>
  <div class="a rn" style="top:241.59px;color:#444">16</div>
  <div class="a" style="left:0;top:266.5px;width:14.3px;height:0.6px;background:#e4e4e4"></div>
  <div class="a rn" style="top:256.59px;color:#444">17</div></div>
<div id="sheet" class="a" style="left:0;top:0;width:640px;height:371.5px;overflow:hidden">
  <svg class="a" style="left:36px;top:152.5px" width="90" height="90" viewBox="0 0 90 90"><defs><linearGradient id="gg" x1="0" y1="0" x2="1" y2="1"><stop offset="0" stop-color="#9aca4a"/><stop offset="1" stop-color="#86bb36"/></linearGradient></defs><path d="M45 45 L58.8 87.4 A44.6 44.6 0 1 1 45 0.4z" fill="#000"/><path d="M45 45 L45 0.4 A44.6 44.6 0 0 1 58.8 87.4z" fill="url(#gg)"/></svg>
  <div class="a" style="left:30.6px;top:104.4px;font-size:17.5px;line-height:17.5px;font-weight:bold;color:#1a1a1a;letter-spacing:0.22px">Plantilla para presupuesto</div>
  <div class="a" style="left:29.75px;top:134.27px;font-size:11.5px;line-height:11.5px;font-weight:bold;color:#222;">% gastos/ingresos</div>
  <div class="a" style="left:136.6px;top:134.07px;font-size:11.5px;line-height:11.5px;font-weight:bold;color:#222;">Resumen</div>
  <div class="a" style="left:135.6px;top:155.97px;font-size:7.6px;line-height:7.6px;font-weight:bold;color:#6a726a;">Total de ingresos mensuales</div>
  <div class="a" style="right:433px;top:167.97px;font-size:7.6px;line-height:7.6px;font-weight:bold;color:#7cb82f;">3.750,00 €</div>
  <div class="a" style="left:135.6px;top:180.97px;font-size:7.6px;line-height:7.6px;font-weight:bold;color:#6a726a;">Total de gastos mensuales</div>
  <div class="a" style="right:433px;top:193.67px;font-size:7.6px;line-height:7.6px;font-weight:bold;color:#7cb82f;">2.058,00 €</div>
  <div class="a" style="left:135.6px;top:206.27px;font-size:7.6px;line-height:7.6px;font-weight:bold;color:#6a726a;">Total de ahorro al mes</div>
  <div class="a" style="right:433px;top:218.57px;font-size:7.6px;line-height:7.6px;font-weight:bold;color:#7cb82f;">550,00 €</div>
  <div class="a" style="left:135.6px;top:231.17px;font-size:7.6px;line-height:7.6px;font-weight:bold;color:#6a726a;">Balance</div>
  <div class="a" style="right:433px;top:243.37px;font-size:7.6px;line-height:7.6px;font-weight:bold;color:#7cb82f;">1.142,00 €</div>
  <div class="a" style="left:71.5px;top:255.1px;font-size:9.2px;line-height:9px;font-weight:bold;color:#7cb82f;">55%</div>
  <div class="a" style="left:29.5px;top:276.52px;font-size:11.5px;line-height:11.5px;font-weight:bold;color:#222;">Entradas</div>
  <div class="a" style="left:29.5px;top:295.57px;font-size:7.6px;line-height:7.6px;font-weight:bold;color:#7cb82f;">Item</div>
  <div class="a" style="left:135.4px;top:295.07px;font-size:7.6px;line-height:7.6px;font-weight:bold;color:#7cb82f;">Cantidad</div>
  <div class="a" style="left:29px;top:311.97px;font-size:7.45px;line-height:7.6px;font-weight:bold;color:#6a726a;">Fuente de ingreso 1</div>
  <div class="a" style="right:432.8px;top:311.67px;font-size:7.6px;line-height:7.6px;font-weight:bold;color:#6a726a;">2.500,00 €</div>
  <div class="a" style="left:29px;top:326.97px;font-size:7.45px;line-height:7.6px;font-weight:bold;color:#6a726a;">Fuente de ingreso 2</div>
  <div class="a" style="right:432.8px;top:327.17px;font-size:7.6px;line-height:7.6px;font-weight:bold;color:#6a726a;">1.000,00 €</div>
  <div class="a" style="left:29px;top:341.97px;font-size:7.45px;line-height:7.6px;font-weight:bold;color:#6a726a;">Otros</div>
  <div class="a" style="right:432.8px;top:342.27px;font-size:7.6px;line-height:7.6px;font-weight:bold;color:#6a726a;">250,00 €</div>
  <div class="a fb" style="left:125.2px;top:295.9px"></div>
  <div class="a fb" style="left:201.6px;top:295.9px"></div>
  <div class="a" style="left:133.1px;top:303.8px;width:78.3px;height:16.5px;border:1.3px solid #2c7a4b"></div>
  <div class="a" style="left:209.6px;top:318.6px;width:3px;height:3px;background:#2c7a4b;border:0.5px solid #fff"></div>
  <svg class="a" style="left:207.6px;top:347.6px" width="3" height="3" viewBox="0 0 3 3"><path d="M3 0 V3 H0z" fill="#3a4fd0"/></svg>
  <div class="a" style="left:30px;top:371px;width:2.6px;height:1.2px;background:#111"></div>
  <div class="a" style="left:35.4px;top:371px;width:2.6px;height:1.2px;background:#111"></div>
  <div class="a" style="left:53.8px;top:371.3px;width:1px;height:0.9px;background:#555"></div>
  <div class="a" style="left:57.5px;top:371px;width:1.5px;height:1.2px;background:#111"></div>
  <div class="a" style="left:64.7px;top:371px;width:1.5px;height:1.2px;background:#111"></div>
  <div class="a" style="left:77px;top:371px;width:7px;height:1.2px;background:#111"></div>
</div>
<div id="tabs" class="a">
  <svg class="a" style="left:7.8px;top:4.8px" width="4" height="6" viewBox="0 0 4 6"><path d="M3.5 0 V6 L0 3z" fill="#777"/></svg>
  <svg class="a" style="left:19.2px;top:4.8px" width="4" height="6" viewBox="0 0 4 6"><path d="M0.5 0 V6 L4 3z" fill="#777"/></svg>
  <div class="a" style="left:30.5px;top:-1px;width:69px;height:13.5px;background:#fff;border-left:0.6px solid #dcdcdc;border-right:0.6px solid #d4d4d4"></div>
  <div class="a" style="left:31.3px;top:11px;width:67.5px;height:1.1px;background:#9ccb5c"></div>
  <div class="a" style="left:38.2px;top:3.5px;font-size:6.2px;line-height:8px;font-weight:bold;color:#7cb82f;-webkit-text-stroke-width:0.1px">Manage My Money</div>
  <div class="a" style="left:106.9px;top:2px;font-size:9px;line-height:9px;font-weight:bold;color:#555">+</div>
  <div class="a" style="left:118.3px;top:0;width:0.6px;height:13px;background:#d6d6d6"></div>
  <div class="a" style="left:0;top:13.5px;width:640px;height:0.8px;background:#fafafa"></div>
</div>
<div id="status" class="a">
  <div class="a" style="left:12.2px;top:1.3px;font-size:6.8px;line-height:8px;color:#444">Listo</div>
  <div class="a" style="left:495.5px;top:0;width:17.5px;height:9.4px;background:#c9c9c9"></div>
  <svg class="a" style="left:500px;top:1.2px" width="8" height="7" viewBox="0 0 8 7"><rect x=".4" y=".4" width="7.2" height="6.2" fill="#eee" stroke="#999" stroke-width=".5"/><path d="M.5 2.3h7M.5 4.2h7" stroke="#aaa" stroke-width=".5"/></svg>
  <svg class="a" style="left:518px;top:1.2px" width="8" height="7" viewBox="0 0 8 7"><rect x=".4" y=".4" width="7.2" height="6.2" fill="#d8d8d8" stroke="#999" stroke-width=".5"/><rect x="2" y="1.5" width="4" height="4" fill="#bbb"/></svg>
  <div class="a" style="left:536px;top:4.2px;width:4px;height:0.8px;background:#888"></div>
  <div class="a" style="left:542.5px;top:4.2px;width:50px;height:1px;background:#999"></div>
  <div class="a" style="left:567px;top:1.6px;width:6px;height:6px;border-radius:50%;background:#fff;box-shadow:0 0.3px 1px rgba(0,0,0,.45)"></div>
  <div class="a" style="left:596px;top:1px;font-size:7.5px;line-height:8px;color:#666">+</div>
  <div class="a" style="left:608.7px;top:1.3px;font-size:6.8px;line-height:8px;color:#4a4a4a;-webkit-text-stroke-width:0.15px">125 %</div>
</div>
<div class="a" style="left:638.4px;top:37px;width:1.6px;height:360px;background:linear-gradient(#dadada,#b9b9b9 30%,#b4b4b4)"></div>
<div id="menu" class="a" style="left:339.8px;top:68px;width:124.4px;height:76.4px;background:#ededed;border-radius:0 0 2.5px 2.5px;box-shadow:0 2px 6px rgba(0,0,0,.22), 0 0 0 0.5px rgba(0,0,0,.1)">
  <div class="a" style="left:0;top:1.8px;width:124.8px;height:9.7px;background:#3b8df5"></div>
  <div class="a mi" style="top:3.00px;color:#fff">€ español (España)</div>
  <div class="a mi" style="top:12.60px">$ inglés (Estados Unidos)</div>
  <div class="a mi" style="top:21.70px">£ inglés (Reino Unido)</div>
  <div class="a mi" style="top:31.30px">€ Euro (€ 123)</div>
  <div class="a mi" style="top:40.40px">¥ chino (China)</div>
  <div class="a mi" style="top:50.40px">CHF francés (Suiza)</div>
  <div class="a" style="left:0;top:61.8px;width:124.8px;height:0.8px;background:#d6d6d6"></div>
  <div class="a mi" style="top:65.90px">Más formatos de contabilidad...</div>
</div>
</div>
</body></html>
